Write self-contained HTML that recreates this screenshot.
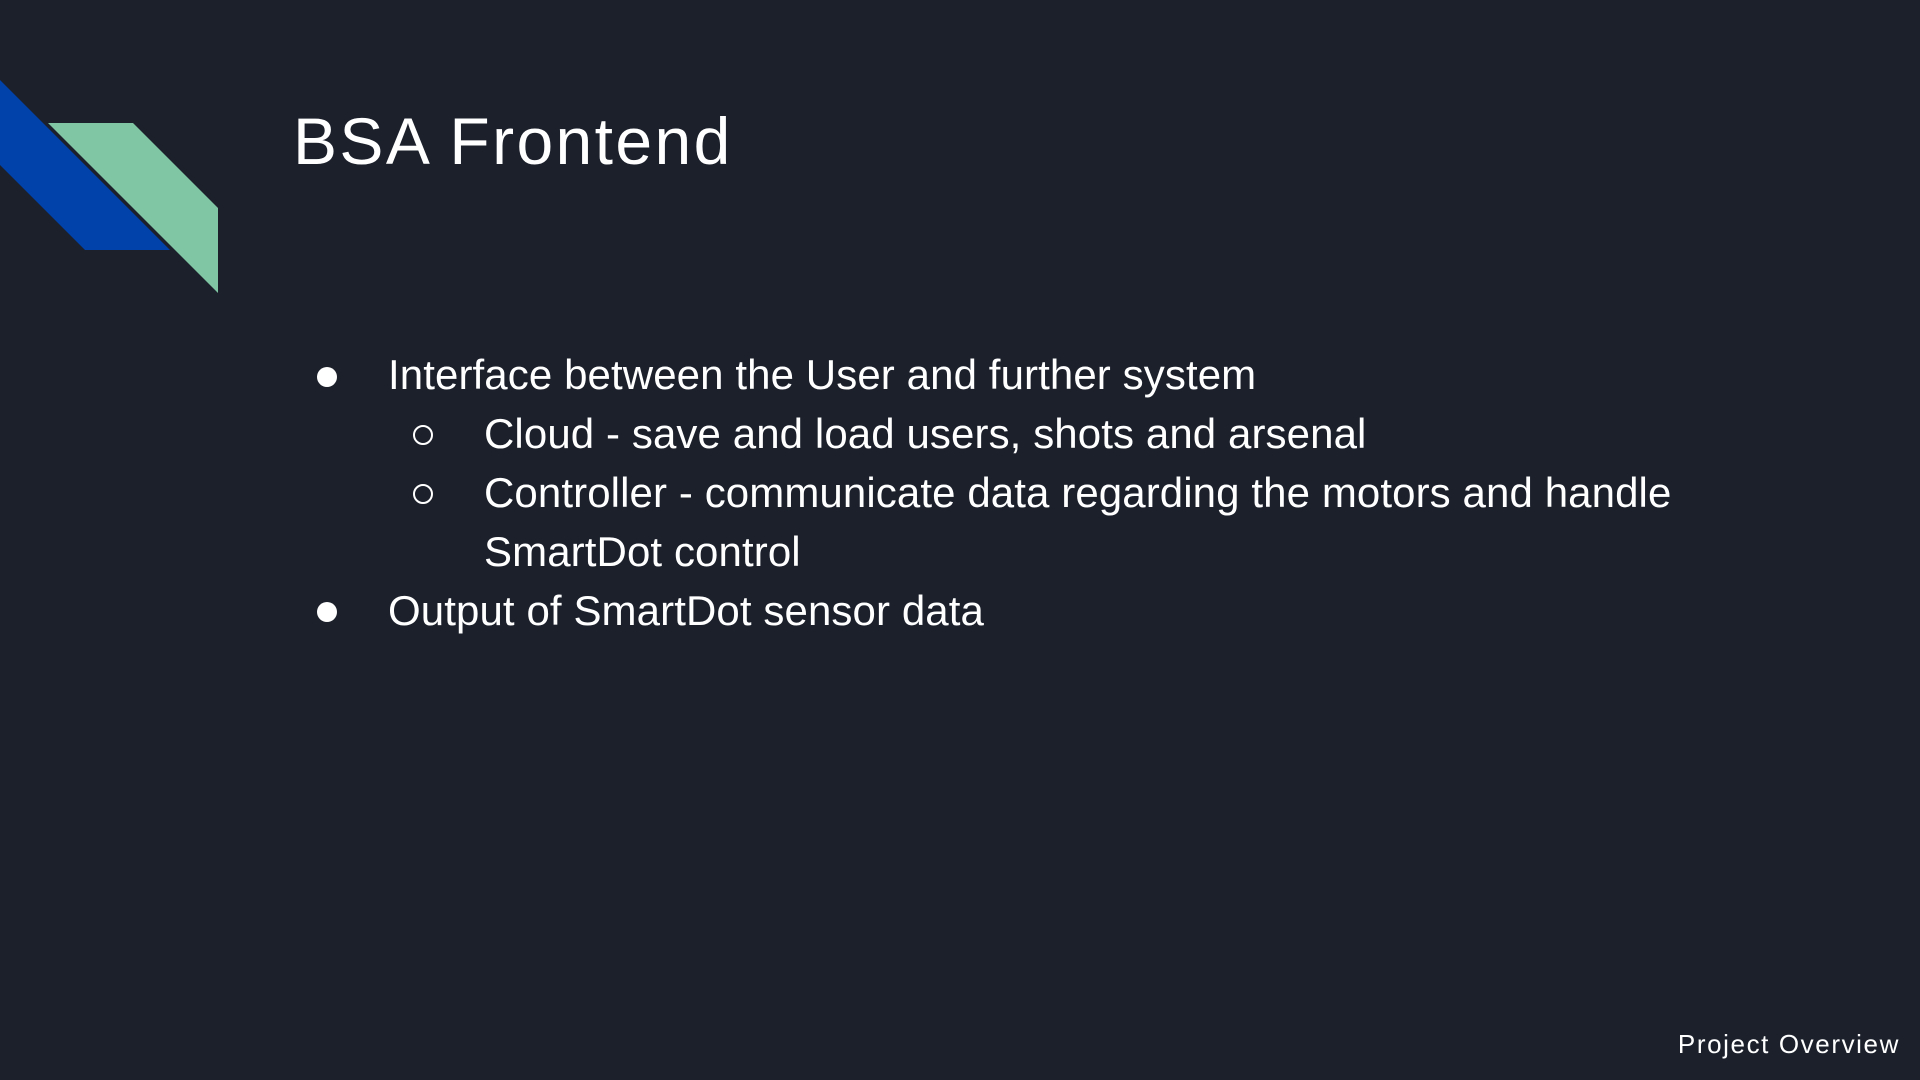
<!DOCTYPE html>
<html><head><meta charset="utf-8"><style>
html,body{margin:0;padding:0}
body{width:1920px;height:1080px;background:#1b202b;position:relative;overflow:hidden;font-family:"Liberation Sans",sans-serif;color:#fff}
.t{position:absolute;white-space:nowrap;line-height:1}
.b{font-size:42px;letter-spacing:0.1px}
.f{position:absolute;width:20px;height:20px;border-radius:50%;background:#fff}
.o{position:absolute;width:16px;height:16px;border-radius:50%;border:2px solid #fff}
</style></head><body>
<svg width="240" height="300" style="position:absolute;left:0;top:0">
<polygon points="0,80 170,250 85,250 0,165" fill="#0041aa"/>
<polygon points="48,123 133,123 218,208 218,293" fill="#80c6a4"/>
</svg>
<div class="t" style="left:293px;top:108px;font-size:66px;letter-spacing:2.4px">BSA Frontend</div>
<div class="f" style="left:317px;top:367px"></div>
<div class="t b" style="left:388px;top:354px">Interface between the User and further system</div>
<div class="o" style="left:413px;top:425px"></div>
<div class="t b" style="left:484px;top:413px">Cloud - save and load users, shots and arsenal</div>
<div class="o" style="left:413px;top:484px"></div>
<div class="t b" style="left:484px;top:472px">Controller - communicate data regarding the motors and handle</div>
<div class="t b" style="left:484px;top:531px">SmartDot control</div>
<div class="f" style="left:317px;top:602px"></div>
<div class="t b" style="left:388px;top:590px">Output of SmartDot sensor data</div>
<div class="t" style="right:20px;top:1031px;font-size:26px;letter-spacing:1.6px">Project Overview</div>
</body></html>
